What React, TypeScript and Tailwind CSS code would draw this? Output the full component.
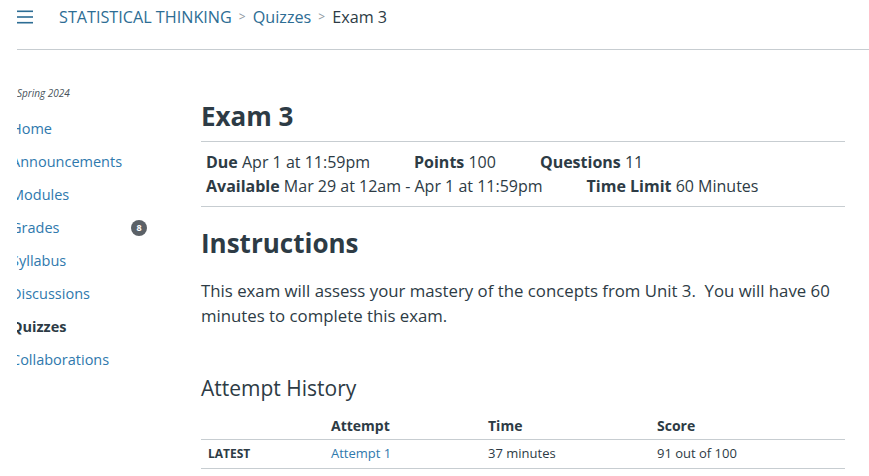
import React from "react";

const navItems = [
  { label: "Home" },
  { label: "Announcements" },
  { label: "Modules" },
  { label: "Grades", badge: 8 },
  { label: "Syllabus" },
  { label: "Discussions" },
  { label: "Quizzes", active: true },
  { label: "Collaborations" },
];

function Hamburger() {
  return (
    <svg width="16" height="14" viewBox="0 0 16 14" fill="none">
      <rect x="0" y="0.5" width="16" height="1.6" fill="#2d6d94" />
      <rect x="0" y="6.2" width="16" height="1.6" fill="#2d6d94" />
      <rect x="0" y="11.9" width="16" height="1.6" fill="#2d6d94" />
    </svg>
  );
}

export default function App() {
  return (
    <div
      className="w-[869px] h-[476px] overflow-hidden bg-white text-[#2d3b45]"
      style={{ fontFamily: '"Open Sans", "Noto Sans", sans-serif' }}
    >
      {/* Top bar with breadcrumbs */}
      <header className="ml-[17px] flex items-center pt-[5px] pb-[20px] border-b border-[#c7cdd1]">
        <Hamburger />
        <nav className="ml-[26px] flex items-center text-[16.2px] leading-[24px]">
          <span className="text-[#2d6d94]">STATISTICAL THINKING</span>
          <span className="mx-[7px] text-[12px] text-[#8b969e]">&gt;</span>
          <span className="text-[#2d6d94]">Quizzes</span>
          <span className="mx-[7px] text-[12px] text-[#8b969e]">&gt;</span>
          <span>Exam 3</span>
        </nav>
      </header>

      <div className="flex">
        {/* Course nav */}
        <aside className="w-[201px] shrink-0 pl-[17px]">
          <div className="overflow-hidden">
            <div className="pt-[36px] text-[10px] leading-[15px] italic text-[#47525a]">
              Spring 2024
            </div>
            <ul className="mt-[11px] -ml-[6px]">
              {navItems.map((item) => (
                <li
                  key={item.label}
                  className="flex items-center justify-between w-[136px] h-[33px] text-[14.5px]"
                >
                  <span
                    className={
                      item.active ? "font-bold text-[#2d3b45]" : "text-[#2f79ad]"
                    }
                  >
                    {item.label}
                  </span>
                  {item.badge && (
                    <span className="flex items-center justify-center w-[16px] h-[16px] rounded-full bg-[#5b6167] text-white text-[9px] font-bold">
                      {item.badge}
                    </span>
                  )}
                </li>
              ))}
            </ul>
          </div>
        </aside>

        {/* Quiz content */}
        <main className="flex-1 pr-[24px]">
          <h1 className="mt-[50px] text-[26px] leading-[32px] font-bold pb-[9px] border-b border-[#c7cdd1]">
            Exam 3
          </h1>
          <div className="pl-[5px] pt-[8px] pb-[8px] text-[16px] leading-[24px] border-b border-[#c7cdd1]">
            <div className="flex">
              <span className="mr-[44px]">
                <b className="font-bold">Due</b> Apr 1 at 11:59pm
              </span>
              <span className="mr-[44px]">
                <b className="font-bold">Points</b> 100
              </span>
              <span>
                <b className="font-bold">Questions</b> 11
              </span>
            </div>
            <div className="flex">
              <span className="mr-[44px]">
                <b className="font-bold">Available</b> Mar 29 at 12am - Apr 1 at 11:59pm
              </span>
              <span>
                <b className="font-bold">Time Limit</b> 60 Minutes
              </span>
            </div>
          </div>

          <h2 className="mt-[20px] text-[26px] leading-[32px] font-bold">Instructions</h2>
          <p className="mt-[19px] text-[16.8px] leading-[25px]">
            This exam will assess your mastery of the concepts from Unit 3.&nbsp; You will have 60
            minutes to complete this exam.
          </p>

          <h3 className="mt-[46px] text-[21px] leading-[28px]">Attempt History</h3>
          <table className="mt-[11px] w-full text-left border-collapse">
            <thead>
              <tr className="border-b border-[#c7cdd1] text-[14px] font-bold">
                <th className="w-[123px] h-[26px] px-[7px]"></th>
                <th className="w-[157px] px-[7px] font-bold">Attempt</th>
                <th className="w-[169px] px-[7px] font-bold">Time</th>
                <th className="px-[7px] font-bold">Score</th>
              </tr>
            </thead>
            <tbody>
              <tr className="border-b border-[#c7cdd1] text-[13px] h-[29px]">
                <td className="px-[7px] text-[12px] font-bold">LATEST</td>
                <td className="px-[7px] text-[#2f79ad]">Attempt 1</td>
                <td className="px-[7px]">37 minutes</td>
                <td className="px-[7px]">91 out of 100</td>
              </tr>
            </tbody>
          </table>
        </main>
      </div>
    </div>
  );
}
